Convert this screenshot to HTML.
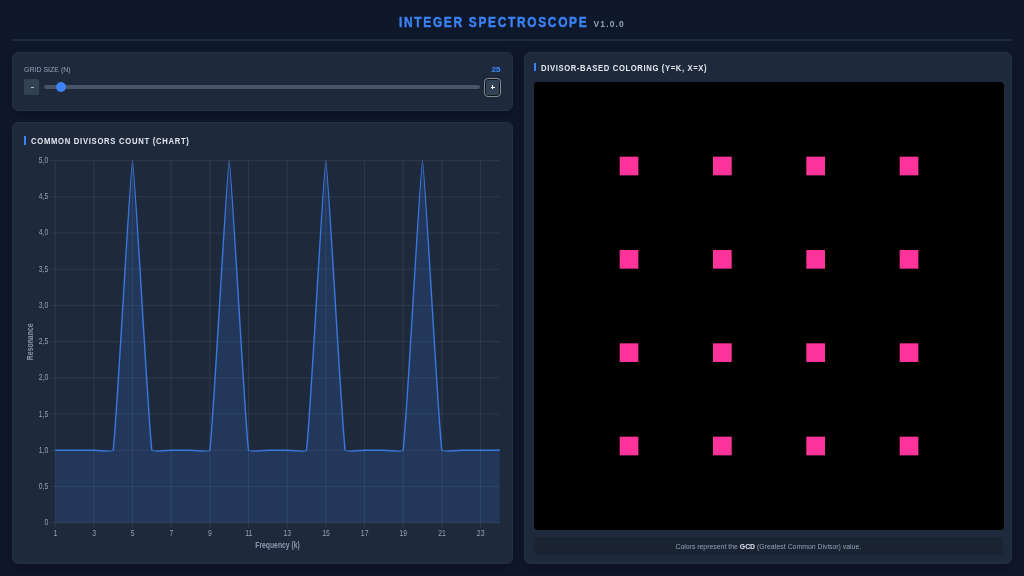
<!DOCTYPE html>
<html><head><meta charset="utf-8">
<style>
*{margin:0;padding:0;box-sizing:border-box}
html,body{width:1024px;height:576px;overflow:hidden;background:#0f172a;font-family:"Liberation Sans",sans-serif}
.abs{position:absolute}
.title{left:0;width:1024px;top:13px;text-align:center;white-space:nowrap}
.t{color:#3b82f6;font-weight:bold;font-size:14px;letter-spacing:2.0px;white-space:nowrap;-webkit-text-stroke:0.45px #3b82f6}
.v{color:#94a3b8;font-weight:bold;font-size:8.5px;letter-spacing:1.1px;white-space:nowrap}
.hr{left:12px;top:39px;width:1000px;height:2px;background:#1e293b}
.panel{background:#1e293b;border:1px solid #243044;border-radius:6px;box-shadow:0 4px 8px rgba(0,0,0,0.25)}
.ptitle{color:#e2e8f0;font-weight:bold;font-size:8.5px;letter-spacing:0.8px;white-space:nowrap;transform:scaleX(0.9);transform-origin:0 0}
.bar{width:2px;background:#3b82f6}
.lbl{color:#94a3b8;font-size:7px;white-space:nowrap}
.btn{background:#334155;border-radius:2px;color:#fff;font-size:9px;text-align:center}
svg text{font-family:"Liberation Sans",sans-serif}
</style></head><body><div style="position:absolute;left:0;top:0;width:1024px;height:576px;will-change:transform">
<div class="abs t" style="left:399.4px;top:13.8px;transform:scaleX(0.85);transform-origin:0 0">INTEGER SPECTROSCOPE</div><div class="abs v" style="left:593.6px;top:18.5px">V1.0.0</div>
<div class="abs hr"></div>

<div class="abs panel" style="left:12px;top:52px;width:501px;height:59px"></div>
<div class="abs lbl" style="left:24px;top:66.1px">GRID SIZE (N)</div>
<div class="abs" style="left:491.5px;top:64.5px;color:#3b82f6;font-weight:bold;font-size:8px;-webkit-text-stroke:0.2px #3b82f6">25</div>
<div class="abs btn" style="left:24px;top:79px;width:15px;height:16px"></div>
<div class="abs" style="left:30.5px;top:87.2px;width:3.4px;height:1.3px;background:#b4bcc8"></div>
<div class="abs" style="left:44.2px;top:85.2px;width:435.8px;height:4px;background:#475569;border-radius:2px"></div>
<div class="abs" style="left:55.7px;top:82.2px;width:10px;height:10px;background:#3b82f6;border-radius:50%"></div>
<div class="abs btn" style="left:483.6px;top:77.7px;width:17.7px;height:19.1px;border:1.9px solid #868a90;border-radius:4px;box-shadow:inset 0 0 0 0.9px #10151c"></div>
<div class="abs" style="left:490.5px;top:86.5px;width:4px;height:1.3px;background:#fff"></div>
<div class="abs" style="left:491.8px;top:85.2px;width:1.3px;height:4px;background:#fff"></div>

<div class="abs panel" style="left:12px;top:122px;width:501px;height:442px"></div>
<div class="abs bar" style="left:24px;top:136px;height:8.5px"></div>
<div class="abs ptitle" style="left:31px;top:136px">COMMON DIVISORS COUNT (CHART)</div>
<svg class="abs" style="left:0;top:0" width="1024" height="576" viewBox="0 0 1024 576">
<g stroke="rgba(148,163,184,0.14)" stroke-width="1">
<line x1="50" y1="522.70" x2="499.80" y2="522.70"/>
<line x1="50" y1="486.49" x2="499.80" y2="486.49"/>
<line x1="50" y1="450.28" x2="499.80" y2="450.28"/>
<line x1="50" y1="414.07" x2="499.80" y2="414.07"/>
<line x1="50" y1="377.86" x2="499.80" y2="377.86"/>
<line x1="50" y1="341.65" x2="499.80" y2="341.65"/>
<line x1="50" y1="305.44" x2="499.80" y2="305.44"/>
<line x1="50" y1="269.23" x2="499.80" y2="269.23"/>
<line x1="50" y1="233.02" x2="499.80" y2="233.02"/>
<line x1="50" y1="196.81" x2="499.80" y2="196.81"/>
<line x1="50" y1="160.60" x2="499.80" y2="160.60"/>
<line x1="55.20" y1="160.60" x2="55.20" y2="527.6"/>
<line x1="93.86" y1="160.60" x2="93.86" y2="527.6"/>
<line x1="132.52" y1="160.60" x2="132.52" y2="527.6"/>
<line x1="171.18" y1="160.60" x2="171.18" y2="527.6"/>
<line x1="209.84" y1="160.60" x2="209.84" y2="527.6"/>
<line x1="248.50" y1="160.60" x2="248.50" y2="527.6"/>
<line x1="287.17" y1="160.60" x2="287.17" y2="527.6"/>
<line x1="325.83" y1="160.60" x2="325.83" y2="527.6"/>
<line x1="364.49" y1="160.60" x2="364.49" y2="527.6"/>
<line x1="403.15" y1="160.60" x2="403.15" y2="527.6"/>
<line x1="441.81" y1="160.60" x2="441.81" y2="527.6"/>
<line x1="480.47" y1="160.60" x2="480.47" y2="527.6"/>
</g>
<path d="M55.20,450.28 C57.13,450.28 72.60,450.28 74.53,450.28 C76.46,450.28 91.93,450.28 93.86,450.28 C95.79,450.28 112.95,452.09 113.19,450.28 C116.82,423.12 130.59,160.60 132.52,160.60 C134.45,160.60 148.23,423.12 151.85,450.28 C152.09,452.09 169.25,450.28 171.18,450.28 C173.12,450.28 188.58,450.28 190.51,450.28 C192.45,450.28 209.60,452.09 209.84,450.28 C213.47,423.12 227.24,160.60 229.17,160.60 C231.11,160.60 244.88,423.12 248.50,450.28 C248.75,452.09 265.90,450.28 267.83,450.28 C269.77,450.28 285.23,450.28 287.17,450.28 C289.10,450.28 306.25,452.09 306.50,450.28 C310.12,423.12 323.89,160.60 325.83,160.60 C327.76,160.60 341.53,423.12 345.16,450.28 C345.40,452.09 362.55,450.28 364.49,450.28 C366.42,450.28 381.88,450.28 383.82,450.28 C385.75,450.28 402.91,452.09 403.15,450.28 C406.77,423.12 420.55,160.60 422.48,160.60 C424.41,160.60 438.18,423.12 441.81,450.28 C442.05,452.09 459.21,450.28 461.14,450.28 C463.07,450.28 478.54,450.28 480.47,450.28 C482.40,450.28 497.87,450.28 499.80,450.28 L499.80,522.70 L55.20,522.70 Z" fill="rgba(59,130,246,0.16)"/>
<path d="M55.20,450.28 C57.13,450.28 72.60,450.28 74.53,450.28 C76.46,450.28 91.93,450.28 93.86,450.28 C95.79,450.28 112.95,452.09 113.19,450.28 C116.82,423.12 130.59,160.60 132.52,160.60 C134.45,160.60 148.23,423.12 151.85,450.28 C152.09,452.09 169.25,450.28 171.18,450.28 C173.12,450.28 188.58,450.28 190.51,450.28 C192.45,450.28 209.60,452.09 209.84,450.28 C213.47,423.12 227.24,160.60 229.17,160.60 C231.11,160.60 244.88,423.12 248.50,450.28 C248.75,452.09 265.90,450.28 267.83,450.28 C269.77,450.28 285.23,450.28 287.17,450.28 C289.10,450.28 306.25,452.09 306.50,450.28 C310.12,423.12 323.89,160.60 325.83,160.60 C327.76,160.60 341.53,423.12 345.16,450.28 C345.40,452.09 362.55,450.28 364.49,450.28 C366.42,450.28 381.88,450.28 383.82,450.28 C385.75,450.28 402.91,452.09 403.15,450.28 C406.77,423.12 420.55,160.60 422.48,160.60 C424.41,160.60 438.18,423.12 441.81,450.28 C442.05,452.09 459.21,450.28 461.14,450.28 C463.07,450.28 478.54,450.28 480.47,450.28 C482.40,450.28 497.87,450.28 499.80,450.28" fill="none" stroke="#3a78e0" stroke-width="1.4" stroke-linejoin="round"/>
<g fill="#94a3b8" font-size="8.4">
<text transform="translate(48.2,525.15) scale(0.81,1)" text-anchor="end">0</text>
<text transform="translate(48.2,488.94) scale(0.81,1)" text-anchor="end">0,5</text>
<text transform="translate(48.2,452.73) scale(0.81,1)" text-anchor="end">1,0</text>
<text transform="translate(48.2,416.52) scale(0.81,1)" text-anchor="end">1,5</text>
<text transform="translate(48.2,380.31) scale(0.81,1)" text-anchor="end">2,0</text>
<text transform="translate(48.2,344.10) scale(0.81,1)" text-anchor="end">2,5</text>
<text transform="translate(48.2,307.89) scale(0.81,1)" text-anchor="end">3,0</text>
<text transform="translate(48.2,271.68) scale(0.81,1)" text-anchor="end">3,5</text>
<text transform="translate(48.2,235.47) scale(0.81,1)" text-anchor="end">4,0</text>
<text transform="translate(48.2,199.26) scale(0.81,1)" text-anchor="end">4,5</text>
<text transform="translate(48.2,163.05) scale(0.81,1)" text-anchor="end">5,0</text>
<text transform="translate(55.40,535.9) scale(0.82,1)" text-anchor="middle">1</text>
<text transform="translate(94.06,535.9) scale(0.82,1)" text-anchor="middle">3</text>
<text transform="translate(132.72,535.9) scale(0.82,1)" text-anchor="middle">5</text>
<text transform="translate(171.38,535.9) scale(0.82,1)" text-anchor="middle">7</text>
<text transform="translate(210.04,535.9) scale(0.82,1)" text-anchor="middle">9</text>
<text transform="translate(248.70,535.9) scale(0.82,1)" text-anchor="middle">11</text>
<text transform="translate(287.37,535.9) scale(0.82,1)" text-anchor="middle">13</text>
<text transform="translate(326.03,535.9) scale(0.82,1)" text-anchor="middle">15</text>
<text transform="translate(364.69,535.9) scale(0.82,1)" text-anchor="middle">17</text>
<text transform="translate(403.35,535.9) scale(0.82,1)" text-anchor="middle">19</text>
<text transform="translate(442.01,535.9) scale(0.82,1)" text-anchor="middle">21</text>
<text transform="translate(480.67,535.9) scale(0.82,1)" text-anchor="middle">23</text>
</g>
<text transform="translate(277.5,547.7) scale(0.8,1)" text-anchor="middle" fill="#8b99ae" font-size="8.5" font-weight="bold">Frequency (k)</text>
<text transform="translate(33.0,341.8) rotate(-90) scale(0.83,1)" text-anchor="middle" fill="#8b99ae" font-size="8.3" font-weight="bold">Resonance</text>
</svg>

<div class="abs panel" style="left:524px;top:52px;width:488.2px;height:511.7px"></div>
<div class="abs bar" style="left:534px;top:63.3px;height:8px"></div>
<div class="abs ptitle" style="left:541px;top:62.6px;letter-spacing:0.7px">DIVISOR-BASED COLORING (Y=K, X=X)</div>
<div class="abs" style="left:534px;top:81.8px;width:470px;height:448.3px;background:#000;border-radius:4px"></div>
<svg class="abs" style="left:0;top:0" width="1024" height="576" viewBox="0 0 1024 576">
<g fill="#ff3399">
<rect x="619.67" y="156.67" width="18.67" height="18.67"/>
<rect x="713.00" y="156.67" width="18.67" height="18.67"/>
<rect x="806.33" y="156.67" width="18.67" height="18.67"/>
<rect x="899.67" y="156.67" width="18.67" height="18.67"/>
<rect x="619.67" y="250.00" width="18.67" height="18.67"/>
<rect x="713.00" y="250.00" width="18.67" height="18.67"/>
<rect x="806.33" y="250.00" width="18.67" height="18.67"/>
<rect x="899.67" y="250.00" width="18.67" height="18.67"/>
<rect x="619.67" y="343.33" width="18.67" height="18.67"/>
<rect x="713.00" y="343.33" width="18.67" height="18.67"/>
<rect x="806.33" y="343.33" width="18.67" height="18.67"/>
<rect x="899.67" y="343.33" width="18.67" height="18.67"/>
<rect x="619.67" y="436.67" width="18.67" height="18.67"/>
<rect x="713.00" y="436.67" width="18.67" height="18.67"/>
<rect x="806.33" y="436.67" width="18.67" height="18.67"/>
<rect x="899.67" y="436.67" width="18.67" height="18.67"/>
</g>
</svg>
<div class="abs" style="left:534.3px;top:536.7px;width:468.6px;height:18.3px;background:#1a2332;border-radius:4px"></div>
<div class="abs" style="left:534.3px;top:542.6px;width:468px;text-align:center;color:#94a3b8;font-size:6.9px;white-space:nowrap">Colors represent the <b style="color:#e2e8f0">GCD</b> (Greatest Common Divisor) value.</div>
</div></body></html>
